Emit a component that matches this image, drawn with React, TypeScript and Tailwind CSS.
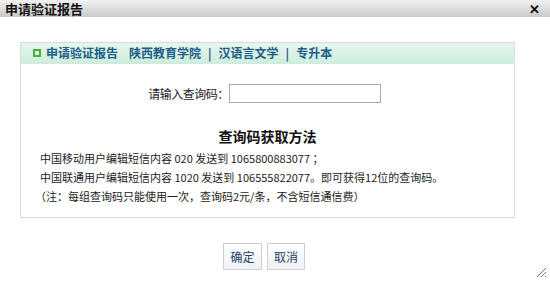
import React from 'react';

const font = { fontFamily: '"Noto Sans CJK SC", "Liberation Sans", sans-serif' };

function ResizeGrip() {
  return (
    <svg width="12" height="12" viewBox="0 0 12 12" className="absolute bottom-[3px] right-[3px]">
      <path d="M11 2 L2 11 M11 6 L6 11 M11 10 L10 11" stroke="#7a7a7a" strokeWidth="1" />
    </svg>
  );
}

export default function App() {
  return (
    <div
      className="relative flex h-[281px] w-[550px] flex-col overflow-hidden bg-white text-[12px] text-[#222]"
      style={font}
    >
      <div className="flex h-[17px] shrink-0 items-center justify-between bg-gradient-to-b from-[#f2f2f2] to-[#c9c9c9] pl-[5px] pr-[10px]">
        <span className="text-[13px] font-bold leading-none text-[#111]">申请验证报告</span>
        <span className="text-[13px] font-bold leading-none text-[#111]">✕</span>
      </div>

      <div className="mx-[20px] mt-[25px] flex h-[176px] w-[495px] flex-col border border-[#dadada]">
        <div className="flex h-[21px] items-center gap-[5px] border-b border-[#d4e9de] bg-gradient-to-b from-[#e6f6ee] to-[#cdeedc] pl-[12px] text-[12px] font-bold text-[#1f5d8a]">
          <span className="h-[8px] w-[8px] border-[2px] border-[#4caf3c] bg-[#dff2d8]" />
          <span className="flex items-center">
            <span className="mr-[11px]">申请验证报告</span>
            <span>陕西教育学院</span>
            <span className="mx-[7px]">|</span>
            <span>汉语言文学</span>
            <span className="mx-[7px]">|</span>
            <span>专升本</span>
          </span>
        </div>

        <div className="mt-[20px] flex items-center justify-center pr-[6px]">
          <span className="text-[12px] tracking-[-0.5px]">请输入查询码：</span>
          <input className="h-[19px] w-[152px] border border-[#a9a9a9] bg-white outline-none" />
        </div>

        <div className="mt-[24px] text-center text-[14px] font-bold leading-[18px] text-[#111]">
          查询码获取方法
        </div>

        <div className="mt-[4px] flex flex-col pl-[19px] text-[11px] leading-[19px]">
          <span>中国移动用户编辑短信内容 020 发送到 1065800883077 ；</span>
          <span>中国联通用户编辑短信内容 1020 发送到 106555822077。即可获得12位的查询码。</span>
          <span className="-ml-[5px]">（注：每组查询码只能使用一次，查询码2元/条，不含短信通信费）</span>
        </div>
      </div>

      <div className="mt-[25px] flex justify-center gap-[5px] pr-[22px]">
        <button className="h-[27px] w-[39px] border border-[#cfcfcf] bg-gradient-to-b from-[#ffffff] to-[#eef1f5] text-[12px] text-[#1f3f66]">
          确定
        </button>
        <button className="h-[27px] w-[38px] border border-[#cfcfcf] bg-gradient-to-b from-[#ffffff] to-[#eef1f5] text-[12px] text-[#1f3f66]">
          取消
        </button>
      </div>

      <ResizeGrip />
    </div>
  );
}
